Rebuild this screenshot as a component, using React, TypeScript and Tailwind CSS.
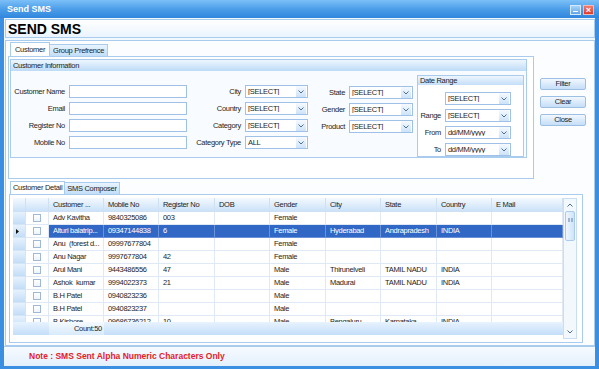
import React from "react";

const COLS = [
  "w-[13px]",
  "w-[23px]",
  "w-[55px]",
  "w-[55px]",
  "w-[56px]",
  "w-[55px]",
  "w-[56px]",
  "w-[55px]",
  "w-[56px]",
  "w-[55px]",
  "w-[71px]",
];

const HEADERS = ["Customer ...", "Mobile No", "Register No", "DOB", "Gender", "City", "State", "Country", "E Mail"];

const ROWS: string[][] = [
  ["Adv Kavitha", "9840325086", "003", "", "Female", "", "", "", ""],
  ["Alturi balatrip...", "09347144838", "6", "", "Female", "Hyderabad", "Andrapradesh", "INDIA", ""],
  ["Anu  (forest d...", "09997677804", "", "", "Female", "", "", "", ""],
  ["Anu Nagar", "9997677804", "42", "", "Female", "", "", "", ""],
  ["Arul Mani", "9443486556", "47", "", "Male", "Thirunelveli", "TAMIL NADU", "INDIA", ""],
  ["Ashok  kumar", "9994022373", "21", "", "Male", "Madurai", "TAMIL NADU", "INDIA", ""],
  ["B.H Patel", "0940823236", "", "", "Male", "", "", "", ""],
  ["B.H Patel", "0940823237", "", "", "Male", "", "", "", ""],
  ["B.Kishore", "09686736212", "10", "", "Male", "Bengaluru", "Karnataka", "INDIA", ""],
];

const Chevron = () => (
  <svg width="6" height="4" viewBox="0 0 6 4">
    <path d="M0.5 0.5 L3 3 L5.5 0.5" fill="none" stroke="#4d6f96" strokeWidth="1" />
  </svg>
);

const TextField = () => <div className="w-[118px] h-[13px] border border-[#9fc1e7] bg-white" />;

const Select = ({ value, w }: { value: string; w: string }) => (
  <div className={`${w} h-[13px] flex items-center border border-[#9fc1e7] bg-white`}>
    <span className="flex-1 pl-[2px] overflow-hidden whitespace-pre">{value}</span>
    <span className="w-[10px] h-[11px] mr-[1px] shrink-0 flex items-center justify-center bg-linear-to-b from-[#f5faff] to-[#cde3f8]">
      <Chevron />
    </span>
  </div>
);

const Field = ({ label, lw, children }: { label: string; lw: string; children: React.ReactNode }) => (
  <div className="flex items-center h-[13px]">
    <span className={`${lw} text-right pr-[4px] whitespace-nowrap`}>{label}</span>
    {children}
  </div>
);

const Button = ({ label }: { label: string }) => (
  <div className="w-[46px] h-[12px] flex items-center justify-center border border-[#9dbfe4] rounded-[2px] bg-linear-to-b from-[#f2f8ff] to-[#c4def7]">
    {label}
  </div>
);

export default function App() {
  return (
    <div className="w-[599px] h-[369px] flex flex-col bg-[#3b8fe2] overflow-hidden font-['Liberation_Sans',Arial,sans-serif] text-[7.5px] tracking-[-0.3px] text-[#1d1d1d] leading-none">
      {/* title bar */}
      <div className="h-[18px] flex items-center justify-between pl-[7px] pr-[5px] bg-linear-to-b from-[#7cc0f7] via-[#4c9ee9] to-[#2f86dc]">
        <span className="text-[9px] tracking-normal font-bold text-white">Send SMS</span>
        <div className="flex gap-[2px] mt-[2px]">
          <div className="w-[11px] h-[10px] flex items-end justify-center pb-[2px] border border-[#d4eafc] bg-linear-to-b from-[#a7d3f8] to-[#5ea6e8]">
            <div className="w-[5px] h-[1px] bg-white" />
          </div>
          <div className="w-[11px] h-[10px] flex items-center justify-center border border-[#f5b9b2] bg-linear-to-b from-[#f07a6c] to-[#d83a2e] text-white text-[9px] tracking-normal font-bold">
            ×
          </div>
        </div>
      </div>

      <div className="flex-1 mx-[4px] mb-[3px] flex flex-col bg-[#f1f8fe]">
        {/* page header */}
        <div className="mt-[1px] ml-[1px] h-[19px] flex items-center pl-[2px] border border-[#a9cbee] bg-linear-to-b from-white to-[#eaf4fe] text-[14px] tracking-normal font-bold text-black">
          SEND SMS
        </div>

        {/* main panel */}
        <div className="mt-[2px] ml-[1px] h-[306px] flex flex-col border border-[#a9cbee] bg-[#fbfdff]">
          <div className="flex">
            <div className="ml-[2px] mt-[1px]">
              <div className="h-[14px] flex items-end pl-[2px]">
                <div className="h-[14px] px-[4px] flex items-center border border-b-0 border-[#a9cbee] bg-white">Customer</div>
                <div className="h-[12px] px-[3px] flex items-center border border-l-0 border-b-0 border-[#a9cbee] bg-linear-to-b from-[#e9f4fe] to-[#c2def8]">
                  Group Prefrence
                </div>
              </div>
              <div className="w-[526px] h-[123px] border border-[#a9cbee] bg-white">
                <div className="ml-[1px] mt-[2px] w-[517px] h-[99px] border border-[#a9cbee] bg-[#f8fbff]">
                  <div className="h-[11px] flex items-center pl-[2px] bg-linear-to-b from-[#eef6fe] to-[#bddbf7]">Customer Information</div>
                  <div className="flex">
                    <div className="flex flex-col gap-[4px] pt-[14px]">
                      <Field label="Customer Name" lw="w-[58px]"><TextField /></Field>
                      <Field label="Email" lw="w-[58px]"><TextField /></Field>
                      <Field label="Register No" lw="w-[58px]"><TextField /></Field>
                      <Field label="Mobile No" lw="w-[58px]"><TextField /></Field>
                    </div>
                    <div className="flex flex-col gap-[4px] pt-[14px]">
                      <Field label="City" lw="w-[58px]"><Select value="[SELECT]" w="w-[63px]" /></Field>
                      <Field label="Country" lw="w-[58px]"><Select value="[SELECT]" w="w-[63px]" /></Field>
                      <Field label="Category" lw="w-[58px]"><Select value="[SELECT]" w="w-[63px]" /></Field>
                      <Field label="Category Type" lw="w-[58px]"><Select value="ALL" w="w-[63px]" /></Field>
                    </div>
                    <div className="flex flex-col gap-[4px] pt-[15px]">
                      <Field label="State" lw="w-[41px]"><Select value="[SELECT]" w="w-[64px]" /></Field>
                      <Field label="Gender" lw="w-[41px]"><Select value="[SELECT]" w="w-[64px]" /></Field>
                      <Field label="Product" lw="w-[41px]"><Select value="[SELECT]" w="w-[64px]" /></Field>
                    </div>
                    <div className="ml-[4px] mt-[4px] w-[107px] h-[82px] border border-[#a9cbee] bg-white">
                      <div className="h-[9px] flex items-center pl-[2px] bg-linear-to-b from-[#eef6fe] to-[#c4def8]">Date Range</div>
                      <div className="flex flex-col gap-[4px] pt-[7px]">
                        <Field label="" lw="w-[27px]"><Select value="[SELECT]" w="w-[66px]" /></Field>
                        <Field label="Range" lw="w-[27px]"><Select value="[SELECT]" w="w-[66px]" /></Field>
                        <Field label="From" lw="w-[27px]"><Select value="dd/MM/yyyy" w="w-[66px]" /></Field>
                        <Field label="To" lw="w-[27px]"><Select value="dd/MM/yyyy" w="w-[66px]" /></Field>
                      </div>
                    </div>
                  </div>
                </div>
              </div>
            </div>
            <div className="ml-[6px] mt-[37px] flex flex-col gap-[6px]">
              <Button label="Filter" />
              <Button label="Clear" />
              <Button label="Close" />
            </div>
          </div>

          {/* detail tabs */}
          <div className="mt-[2px] pl-[4px] h-[13px] flex items-end">
            <div className="h-[13px] px-[2px] flex items-center border border-b-0 border-[#a9cbee] bg-white">Customer Detail</div>
            <div className="h-[12px] px-[2px] flex items-center border border-l-0 border-b-0 border-[#a9cbee] bg-linear-to-b from-[#e9f4fe] to-[#c2def8]">
              SMS Composer
            </div>
          </div>
          <div className="ml-[3px] w-[574px] h-[149px] flex pl-[3px] pt-[3px] border border-[#a9cbee] bg-white">
            <div className="w-[550px] flex flex-col">
              {/* header */}
              <div className="h-[14px] flex">
                {COLS.map((c, i) => (
                  <div
                    key={i}
                    className={`${c} shrink-0 h-full flex items-center pl-[4px] border-r border-b border-[#cfe0f2] bg-linear-to-b from-[#f4f9ff] to-[#cbe2f8] overflow-hidden whitespace-nowrap`}
                  >
                    {i > 1 ? HEADERS[i - 2] : ""}
                  </div>
                ))}
              </div>
              <div className="h-[110px] overflow-hidden">
                {ROWS.map((r, ri) => {
                  const sel = ri === 1;
                  return (
                    <div key={ri} className="h-[13px] flex">
                      <div className="w-[13px] shrink-0 h-full flex items-center pl-[3px] border-r border-b border-[#d3e4f5] bg-linear-to-b from-[#e6f2fe] to-[#c3ddf6]">
                        {sel && (
                          <svg width="3" height="5" viewBox="0 0 3 5">
                            <path d="M0 0 L3 2.5 L0 5 Z" fill="#111" />
                          </svg>
                        )}
                      </div>
                      <div className="w-[23px] shrink-0 h-full flex items-center justify-center border-r border-b border-[#dfe9f5] bg-white">
                        <div className="w-[8px] h-[8px] border border-[#9fb8d6] bg-linear-to-b from-white to-[#eef4fb]" />
                      </div>
                      {r.map((v, ci) => (
                        <div
                          key={ci}
                          className={`${COLS[ci + 2]} shrink-0 h-full flex items-center pl-[4px] border-r border-b overflow-hidden whitespace-pre ${
                            sel ? "bg-[#3168c6] text-white border-[#6b92d6]" : "border-[#dfe9f5]"
                          }`}
                        >
                          {v}
                        </div>
                      ))}
                    </div>
                  );
                })}
              </div>
              {/* footer */}
              <div className="h-[13px] flex bg-linear-to-b from-[#e8f3fe] to-[#c4def8]">
                <div className="w-[36px]" />
                <div className="w-[55px] flex items-center justify-end pr-[2px] bg-linear-to-b from-[#f5faff] to-[#d8eafb]">Count:50</div>
              </div>
            </div>
            {/* scrollbar */}
            <div className="w-[14px] h-[141px] flex flex-col border border-[#c9def3] bg-[#f3f8fd]">
              <div className="h-[12px] flex items-center justify-center">
                <svg width="6" height="4" viewBox="0 0 6 4">
                  <path d="M0.5 3.5 L3 1 L5.5 3.5" fill="none" stroke="#4d6f96" strokeWidth="1" />
                </svg>
              </div>
              <div className="mx-[1px] h-[30px] flex items-start justify-center pt-[6px] border border-[#a9cbee] rounded-[2px] bg-linear-to-r from-[#eef6fe] to-[#cfe4f9]">
                <svg width="5" height="5" viewBox="0 0 5 5">
                  <path d="M0 1 H2 M3 1 H5 M0 3 H2 M3 3 H5" stroke="#5b7ea6" strokeWidth="1" />
                </svg>
              </div>
              <div className="flex-1" />
              <div className="h-[12px] flex items-center justify-center">
                <Chevron />
              </div>
            </div>
          </div>
        </div>

        {/* note */}
        <div className="flex-1 flex items-center pl-[25px] border-t border-[#a9cbee] bg-linear-to-b from-[#f6fbff] to-[#e3f0fc] text-[8.5px] tracking-normal font-bold text-[#e5202a]">
          Note : SMS Sent Alpha Numeric Characters Only
        </div>
      </div>
    </div>
  );
}
